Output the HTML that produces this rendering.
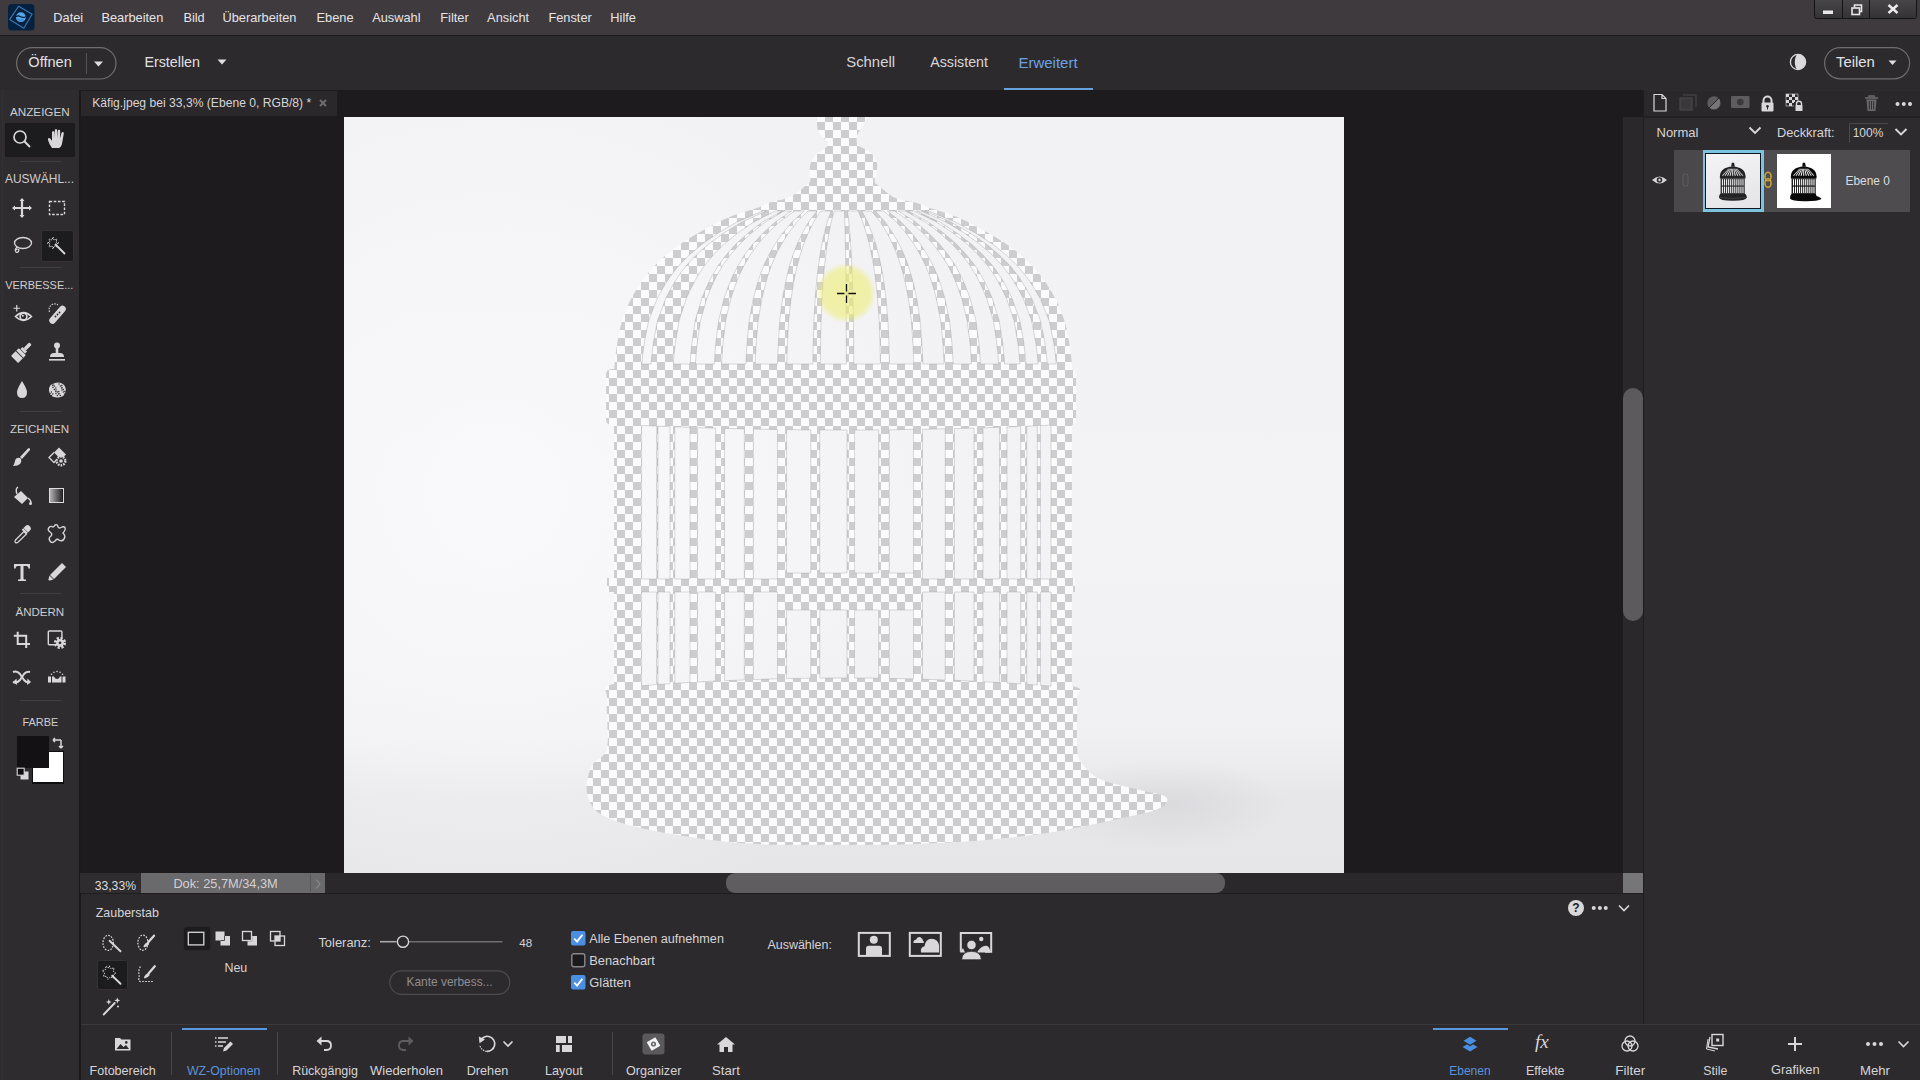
<!DOCTYPE html>
<html><head><meta charset="utf-8"><title>Photoshop Elements</title>
<style>
html,body{margin:0;padding:0;width:1920px;height:1080px;overflow:hidden;background:#2c2a2d}
body{position:relative;font-family:"Liberation Sans",sans-serif}
.t{position:absolute;white-space:nowrap}
svg{overflow:visible}
</style></head><body>
<div style="position:absolute;left:0px;top:0px;width:1920px;height:35px;background:#3f3a3e;"></div>
<div style="position:absolute;left:0px;top:35px;width:1920px;height:55px;background:#2c2a2d;"></div>
<div style="position:absolute;left:0px;top:35px;width:1920px;height:1px;background:#1b191c;"></div>
<div style="position:absolute;left:0px;top:90px;width:79px;height:990px;background:#2e2c2f;"></div>
<div style="position:absolute;left:79px;top:90px;width:1px;height:990px;background:#232124;"></div>
<div style="position:absolute;left:80px;top:90px;width:1563px;height:783px;background:#1d1b1e;"></div>
<div style="position:absolute;left:80px;top:91px;width:257px;height:25px;background:#2a282b;"></div>
<div style="position:absolute;left:1623px;top:117px;width:20px;height:756px;background:#2a282b;"></div>
<div style="position:absolute;left:1643px;top:90px;width:1px;height:934px;background:#1f1d20;"></div>
<div style="position:absolute;left:1644px;top:90px;width:276px;height:934px;background:#2d2b2e;"></div>
<div style="position:absolute;left:80px;top:873px;width:1543px;height:20px;background:#2a282b;"></div>
<div style="position:absolute;left:80px;top:893px;width:1563px;height:1px;background:#1f1d20;"></div>
<div style="position:absolute;left:80px;top:894px;width:1563px;height:130px;background:#2c2a2d;"></div>
<div style="position:absolute;left:80px;top:1024px;width:1840px;height:1px;background:#3b393c;"></div>
<div style="position:absolute;left:80px;top:1025px;width:1840px;height:55px;background:#2c2a2d;"></div>
<div style="position:absolute;left:79px;top:90px;width:2px;height:990px;background:#1b191c;"></div>
<div style="position:absolute;left:2px;top:90px;width:1px;height:990px;background:#333134;"></div>
<svg style="position:absolute;left:8px;top:4px;" width="27" height="27" viewBox="0 0 27 27"><rect x="0" y="0" width="26.5" height="26.5" rx="4" fill="#06203f"/>
<polygon points="10.6,2.2 24.1,10.3 15.8,24.3 1.7,15.4" fill="none" stroke="#3a78ad" stroke-width="1.15" stroke-linejoin="round"/>
<circle cx="12.85" cy="13.2" r="4.9" fill="#58a6ea"/>
<path d="M7.9 12.6 Q10 11.2 12.6 12.7 Q15.2 14.2 17.8 12.6" fill="none" stroke="#04152c" stroke-width="1.1"/>
<path d="M9.5 15.5 Q12 16.8 15.5 15.8" fill="none" stroke="#2b6fb0" stroke-width="0.8"/></svg>
<div class="t" style="left:53.30px;top:11.50px;font-size:12.8px;line-height:12.8px;color:#e6e4e7;">Datei</div>
<div class="t" style="left:101.40px;top:11.50px;font-size:12.8px;line-height:12.8px;color:#e6e4e7;">Bearbeiten</div>
<div class="t" style="left:183.40px;top:11.50px;font-size:12.8px;line-height:12.8px;color:#e6e4e7;">Bild</div>
<div class="t" style="left:222.50px;top:11.50px;font-size:12.8px;line-height:12.8px;color:#e6e4e7;">Überarbeiten</div>
<div class="t" style="left:316.50px;top:11.50px;font-size:12.8px;line-height:12.8px;color:#e6e4e7;">Ebene</div>
<div class="t" style="left:372.20px;top:11.50px;font-size:12.8px;line-height:12.8px;color:#e6e4e7;">Auswahl</div>
<div class="t" style="left:440.30px;top:11.50px;font-size:12.8px;line-height:12.8px;color:#e6e4e7;">Filter</div>
<div class="t" style="left:487.10px;top:11.50px;font-size:12.8px;line-height:12.8px;color:#e6e4e7;">Ansicht</div>
<div class="t" style="left:548.40px;top:11.50px;font-size:12.8px;line-height:12.8px;color:#e6e4e7;">Fenster</div>
<div class="t" style="left:610.30px;top:11.50px;font-size:12.8px;line-height:12.8px;color:#e6e4e7;">Hilfe</div>
<svg style="position:absolute;left:1814px;top:0px;" width="103" height="19" viewBox="0 0 103 19"><defs><linearGradient id="wb" x1="0" y1="0" x2="0" y2="1"><stop offset="0" stop-color="#4a474a"/><stop offset="1" stop-color="#353235"/></linearGradient></defs><rect x="0.5" y="-2" width="102" height="20.5" rx="2" fill="url(#wb)" stroke="#151415" stroke-width="1"/>
<line x1="28.5" y1="0" x2="28.5" y2="18" stroke="#151415"/>
<line x1="55.5" y1="0" x2="55.5" y2="18" stroke="#151415"/>
<rect x="9" y="10.5" width="10" height="3.5" fill="#e8e8e8"/>
<rect x="38" y="8" width="7.5" height="6.5" fill="none" stroke="#e8e8e8" stroke-width="1.6"/>
<path d="M40.5 7.5 V5 H47.5 V11.5 H45.5" fill="none" stroke="#e8e8e8" stroke-width="1.6"/>
<path d="M74.5 5 L83.5 13 M83.5 5 L74.5 13" stroke="#ececec" stroke-width="2.4"/></svg>
<svg style="position:absolute;left:16px;top:47px;" width="101" height="33" viewBox="0 0 101 33"><rect x="0.6" y="0.6" width="99.4" height="31.4" rx="15.7" fill="none" stroke="#6f6d70" stroke-width="1.2"/>
<line x1="70.5" y1="6" x2="70.5" y2="27" stroke="#555356" stroke-width="1"/>
<path d="M78 14.5 L87 14.5 L82.5 19.5 Z" fill="#e0dee1"/></svg>
<div class="t" style="left:28.30px;top:55.28px;font-size:14.6px;line-height:14.6px;color:#e2e0e3;">Öffnen</div>
<div class="t" style="left:144.40px;top:55.32px;font-size:14.3px;line-height:14.3px;color:#e2e0e3;">Erstellen</div>
<svg style="position:absolute;left:216px;top:57px;" width="12" height="10" viewBox="0 0 12 10"><path d="M1.5 2.5 L10.5 2.5 L6 7.5 Z" fill="#e0dee1"/></svg>
<div class="t" style="left:846.30px;top:55.26px;font-size:14.85px;line-height:14.85px;color:#d8d6d9;">Schnell</div>
<div class="t" style="left:930.20px;top:55.33px;font-size:14.24px;line-height:14.24px;color:#d8d6d9;">Assistent</div>
<div class="t" style="left:1018.40px;top:55.24px;font-size:15.0px;line-height:15.0px;color:#6ba3e3;">Erweitert</div>
<div style="position:absolute;left:1004px;top:88px;width:89px;height:2px;background:#6aa2dd;"></div>
<svg style="position:absolute;left:1789px;top:53px;" width="18" height="18" viewBox="0 0 18 18"><circle cx="9" cy="9" r="7.6" fill="none" stroke="#dcdadd" stroke-width="1.3"/>
<path d="M9 1.4 A7.6 7.6 0 0 1 9 16.6 A3.2 7.6 0 0 1 9 1.4 Z" fill="#dcdadd"/></svg>
<svg style="position:absolute;left:1824px;top:47px;" width="87" height="33" viewBox="0 0 87 33"><rect x="0.6" y="0.6" width="85" height="31.2" rx="15.6" fill="none" stroke="#6f6d70" stroke-width="1.2"/>
<path d="M64.5 13.5 L72.5 13.5 L68.5 18 Z" fill="#e0dee1"/></svg>
<div class="t" style="left:1836.00px;top:55.25px;font-size:14.9px;line-height:14.9px;color:#e2e0e3;">Teilen</div>
<div class="t" style="left:92.20px;top:96.87px;font-size:12.14px;line-height:12.14px;color:#d6d4d7;">Käfig.jpeg bei 33,3% (Ebene 0, RGB/8) *</div>
<svg style="position:absolute;left:318px;top:98px;" width="10" height="10" viewBox="0 0 10 10"><path d="M2 2 L8 8 M8 2 L2 8" stroke="#6e6c6f" stroke-width="2"/></svg>
<div style="position:absolute;left:344px;top:117px;width:1000px;height:756px;background:radial-gradient(ellipse 45% 60% at 15% 50%, rgba(250,250,252,0.9) 0%, rgba(250,250,252,0) 100%), linear-gradient(180deg, #f2f1f4 0%, #f3f2f5 60%, #f0eff2 82%, #e7e6e9 90%, #e6e5e8 100%);"></div>
<div style="position:absolute;left:1060px;top:760px;width:240px;height:90px;background:radial-gradient(ellipse 50% 50% at 45% 50%, rgba(210,209,213,0.6) 0%, rgba(210,209,213,0) 100%);"></div>
<svg style="position:absolute;left:0px;top:0px;pointer-events:none" width="1920" height="1080" viewBox="0 0 1920 1080"><defs><pattern id="chk" patternUnits="userSpaceOnUse" x="1" y="2" width="16" height="16">
<rect width="16" height="16" fill="#fbfbfc"/><rect x="8" y="0" width="8" height="8" fill="#cdcdcf"/><rect x="0" y="8" width="8" height="8" fill="#cdcdcf"/></pattern>
<filter id="bl" x="-5%" y="-5%" width="110%" height="110%"><feGaussianBlur stdDeviation="0.7 0.2"/></filter><clipPath id="cv"><rect x="344" y="117" width="1000" height="756"/></clipPath>
<mask id="gm"><rect width="1920" height="1080" fill="#fff"/><path d="M641.6 425.4 L656.7 426.1 L656.7 579 L641.6 579 Z M641.6 592 L656.7 592 L656.7 684.6 L641.6 685.7 Z M658 426.1 L670 426.6 L670 579 L658 579 Z M658 592 L670 592 L670 683.7 L658 684.5 Z M674.8 426.8 L690 427.3 L690 579 L674.8 579 Z M674.8 592 L690 592 L690 682.4 L674.8 683.4 Z M697.5 427.6 L715.6 428.2 L715.6 579 L697.5 579 Z M697.5 592 L715.6 592 L715.6 681.1 L697.5 682.0 Z M724.6 428.4 L744.3 428.9 L744.3 579 L724.6 579 Z M724.6 592 L744.3 592 L744.3 679.9 L724.6 680.7 Z M753.4 429.1 L777.5 429.5 L777.5 579 L753.4 579 Z M753.4 592 L777.5 592 L777.5 678.8 L753.4 679.5 Z M786.6 429.6 L810.8 429.9 L810.8 573 L786.6 573 Z M786.6 610 L810.8 610 L810.8 678.2 L786.6 678.6 Z M819.8 429.9 L847 430.0 L847 573 L819.8 573 Z M819.8 610 L847 610 L847 678.0 L819.8 678.1 Z M854.6 430.0 L878.7 429.9 L878.7 573 L854.6 573 Z M854.6 610 L878.7 610 L878.7 678.2 L854.6 678.0 Z M889.3 429.8 L913.5 429.4 L913.5 573 L889.3 573 Z M889.3 610 L913.5 610 L913.5 678.9 L889.3 678.4 Z M922.5 429.3 L945.2 428.8 L945.2 579 L922.5 579 Z M922.5 592 L945.2 592 L945.2 680.0 L922.5 679.2 Z M954.3 428.6 L974 428.1 L974 579 L954.3 579 Z M954.3 592 L974 592 L974 681.2 L954.3 680.3 Z M983 427.8 L999.6 427.2 L999.6 579 L983 579 Z M983 592 L999.6 592 L999.6 682.6 L983 681.7 Z M1007 427.0 L1020.7 426.4 L1020.7 579 L1007 579 Z M1007 592 L1020.7 592 L1020.7 683.9 L1007 683.1 Z M1026.8 426.2 L1037.3 425.7 L1037.3 579 L1026.8 579 Z M1026.8 592 L1037.3 592 L1037.3 685.1 L1026.8 684.4 Z M1040.4 425.6 L1051 425.1 L1051 579 L1040.4 579 Z M1040.4 592 L1051 592 L1051 686.2 L1040.4 685.3 Z M762.7 211.0 737.4 221.9 718.3 232.9 702.5 243.8 689.5 254.7 678.8 265.6 670.1 276.6 663.2 287.5 657.2 298.4 652.9 309.4 648.7 320.3 646.5 331.2 644.4 342.1 642.9 353.1 641.8 364.0 651.0 364.0 652.1 353.1 653.5 342.1 655.5 331.2 657.6 320.3 661.7 309.4 665.7 298.4 671.5 287.5 678.0 276.6 686.3 265.6 696.6 254.7 708.9 243.8 724.1 232.9 742.2 221.9 766.4 211.0 Z M775.3 211.0 753.9 221.9 737.9 232.9 724.5 243.8 713.6 254.7 704.5 265.6 697.2 276.6 691.4 287.5 686.3 298.4 682.7 309.4 679.1 320.3 677.3 331.2 675.5 342.1 674.2 353.1 673.3 364.0 690.1 364.0 690.9 353.1 692.1 342.1 693.7 331.2 695.3 320.3 698.6 309.4 701.8 298.4 706.4 287.5 711.6 276.6 718.2 265.6 726.4 254.7 736.2 243.8 748.3 232.9 762.7 221.9 782.0 211.0 Z M784.2 211.0 765.5 221.9 751.6 232.9 739.9 243.8 730.4 254.7 722.6 265.6 716.2 276.6 711.1 287.5 706.7 298.4 703.6 309.4 700.5 320.3 698.9 331.2 697.3 342.1 696.2 353.1 695.4 364.0 714.3 364.0 715.0 353.1 715.9 342.1 717.3 331.2 718.7 320.3 721.4 309.4 724.1 298.4 728.0 287.5 732.4 276.6 738.0 265.6 744.8 254.7 753.1 243.8 763.3 232.9 775.5 221.9 791.7 211.0 Z M794.6 211.0 779.3 221.9 767.8 232.9 758.2 243.8 750.4 254.7 743.9 265.6 738.6 276.6 734.5 287.5 730.8 298.4 728.2 309.4 725.7 320.3 724.4 331.2 723.1 342.1 722.2 353.1 721.5 364.0 745.9 364.0 746.4 353.1 747.2 342.1 748.2 331.2 749.2 320.3 751.3 309.4 753.4 298.4 756.3 287.5 759.6 276.6 763.8 265.6 769.0 254.7 775.2 243.8 782.9 232.9 792.1 221.9 804.4 211.0 Z M808.0 211.0 797.0 221.9 788.6 232.9 781.7 243.8 776.0 254.7 771.3 265.6 767.5 276.6 764.5 287.5 761.9 298.4 760.0 309.4 758.2 320.3 757.2 331.2 756.3 342.1 755.6 353.1 755.2 364.0 777.5 364.0 777.9 353.1 778.4 342.1 779.1 331.2 779.8 320.3 781.2 309.4 782.6 298.4 784.5 287.5 786.8 276.6 789.6 265.6 793.1 254.7 797.3 243.8 802.5 232.9 808.7 221.9 817.0 211.0 Z M820.7 211.0 813.6 221.9 808.2 232.9 803.8 243.8 800.2 254.7 797.2 265.6 794.7 276.6 792.8 287.5 791.1 298.4 789.9 309.4 788.7 320.3 788.1 331.2 787.5 342.1 787.1 353.1 786.8 364.0 812.9 364.0 813.0 353.1 813.3 342.1 813.6 331.2 813.9 320.3 814.6 309.4 815.2 298.4 816.1 287.5 817.2 276.6 818.5 265.6 820.1 254.7 822.0 243.8 824.4 232.9 827.3 221.9 831.1 211.0 Z M834.1 211.0 831.2 221.9 829.0 232.9 827.2 243.8 825.8 254.7 824.5 265.6 823.5 276.6 822.8 287.5 822.1 298.4 821.6 309.4 821.1 320.3 820.8 331.2 820.6 342.1 820.4 353.1 820.3 364.0 846.3 364.0 846.3 353.1 846.3 342.1 846.2 331.2 846.2 320.3 846.1 309.4 846.1 298.4 846.0 287.5 845.9 276.6 845.8 265.6 845.6 254.7 845.4 243.8 845.2 232.9 844.9 221.9 844.5 211.0 Z M847.5 211.0 848.8 221.9 849.8 232.9 850.6 243.8 851.3 254.7 851.8 265.6 852.3 276.6 852.6 287.5 852.9 298.4 853.2 309.4 853.4 320.3 853.5 331.2 853.6 342.1 853.7 353.1 853.7 364.0 880.4 364.0 880.2 353.1 880.0 342.1 879.6 331.2 879.2 320.3 878.4 309.4 877.6 298.4 876.5 287.5 875.2 276.6 873.6 265.6 871.6 254.7 869.3 243.8 866.3 232.9 862.8 221.9 858.2 211.0 Z M861.8 211.0 867.6 221.9 871.9 232.9 875.6 243.8 878.5 254.7 881.0 265.6 883.0 276.6 884.6 287.5 886.0 298.4 886.9 309.4 887.9 320.3 888.4 331.2 888.9 342.1 889.2 353.1 889.5 364.0 913.8 364.0 913.4 353.1 912.9 342.1 912.1 331.2 911.4 320.3 909.9 309.4 908.4 298.4 906.3 287.5 903.9 276.6 900.8 265.6 897.1 254.7 892.6 243.8 887.0 232.9 880.4 221.9 871.5 211.0 Z M875.1 211.0 885.1 221.9 892.6 232.9 898.9 243.8 904.0 254.7 908.2 265.6 911.6 276.6 914.4 287.5 916.7 298.4 918.4 309.4 920.1 320.3 921.0 331.2 921.8 342.1 922.4 353.1 922.8 364.0 944.1 364.0 943.6 353.1 942.8 342.1 941.8 331.2 940.7 320.3 938.5 309.4 936.4 298.4 933.4 287.5 929.9 276.6 925.6 265.6 920.2 254.7 913.7 243.8 905.8 232.9 896.3 221.9 883.6 211.0 Z M887.3 211.0 901.1 221.9 911.5 232.9 920.1 243.8 927.2 254.7 933.1 265.6 937.8 276.6 941.6 287.5 944.8 298.4 947.2 309.4 949.5 320.3 950.7 331.2 951.8 342.1 952.6 353.1 953.2 364.0 971.5 364.0 970.8 353.1 969.9 342.1 968.5 331.2 967.1 320.3 964.4 309.4 961.7 298.4 957.9 287.5 953.5 276.6 948.0 265.6 941.1 254.7 932.9 243.8 922.8 232.9 910.7 221.9 894.6 211.0 Z M898.2 211.0 915.5 221.9 928.4 232.9 939.2 243.8 948.0 254.7 955.4 265.6 961.3 276.6 966.0 287.5 970.1 298.4 973.0 309.4 975.9 320.3 977.3 331.2 978.8 342.1 979.8 353.1 980.5 364.0 998.6 364.0 997.8 353.1 996.6 342.1 995.0 331.2 993.3 320.3 990.0 309.4 986.7 298.4 982.1 287.5 976.8 276.6 970.1 265.6 961.8 254.7 951.8 243.8 939.6 232.9 925.0 221.9 905.4 211.0 Z M907.8 211.0 928.1 221.9 943.4 232.9 956.1 243.8 966.4 254.7 975.0 265.6 982.0 276.6 987.5 287.5 992.3 298.4 995.7 309.4 999.1 320.3 1000.9 331.2 1002.6 342.1 1003.8 353.1 1004.6 364.0 1020.0 364.0 1019.0 353.1 1017.7 342.1 1015.9 331.2 1014.0 320.3 1010.2 309.4 1006.5 298.4 1001.2 287.5 995.2 276.6 987.6 265.6 978.1 254.7 966.8 243.8 952.9 232.9 936.2 221.9 914.0 211.0 Z M916.4 211.0 939.4 221.9 956.6 232.9 971.0 243.8 982.7 254.7 992.5 265.6 1000.4 276.6 1006.6 287.5 1012.1 298.4 1015.9 309.4 1019.8 320.3 1021.8 331.2 1023.7 342.1 1025.0 353.1 1026.0 364.0 1038.2 364.0 1037.1 353.1 1035.7 342.1 1033.6 331.2 1031.5 320.3 1027.4 309.4 1023.3 298.4 1017.5 287.5 1010.8 276.6 1002.4 265.6 992.0 254.7 979.5 243.8 964.2 232.9 945.8 221.9 921.2 211.0 Z M924.9 211.0 950.6 221.9 969.8 232.9 985.9 243.8 999.0 254.7 1009.9 265.6 1018.6 276.6 1025.6 287.5 1031.7 298.4 1036.0 309.4 1040.3 320.3 1042.6 331.2 1044.7 342.1 1046.2 353.1 1047.3 364.0 1056.3 364.0 1055.2 353.1 1053.6 342.1 1051.4 331.2 1049.1 320.3 1044.6 309.4 1040.1 298.4 1033.7 287.5 1026.4 276.6 1017.2 265.6 1005.9 254.7 992.2 243.8 975.4 232.9 955.3 221.9 928.5 211.0 Z" fill="#000"/></mask></defs>
<g clip-path="url(#cv)"><g filter="url(#bl)"><g fill="url(#chk)" mask="url(#gm)"><path d="M816.8 112.0 C816.8 112.8 816.6 114.0 816.8 117.0 C817.0 120.0 816.9 126.9 817.9 130.3 C818.9 133.7 821.3 135.5 823.0 137.5 C824.7 139.5 827.5 140.8 828.0 142.5 C828.5 144.2 827.9 145.7 826.0 147.6 C824.1 149.5 819.3 151.2 816.8 153.8 C814.2 156.4 811.9 159.8 810.7 163.0 C809.5 166.2 809.8 170.0 809.7 173.0 C809.6 176.0 811.1 179.0 810.2 181.2 C809.4 183.4 806.7 184.4 804.6 186.3 C802.5 188.2 800.7 190.4 797.5 192.4 C794.3 194.4 789.9 196.9 785.3 198.6 C780.7 200.3 774.6 201.1 770.0 202.6 C765.4 204.1 764.1 205.4 757.4 207.8 C750.7 210.2 738.9 213.1 729.6 217.0 C720.4 220.9 711.2 225.8 701.9 231.0 C692.6 236.2 682.6 241.9 674.0 248.5 C665.4 255.1 656.8 263.0 650.0 270.7 C643.2 278.4 637.9 286.5 633.3 294.8 C628.7 303.1 625.0 312.1 622.2 320.7 C619.4 329.3 618.1 338.0 616.7 346.7 C615.3 355.4 614.4 368.3 613.9 372.6  L1072.7 372.6 C1072.2 368.3 1071.3 355.4 1069.9 346.7 C1068.5 338.0 1067.2 329.3 1064.4 320.7 C1061.6 312.1 1057.9 303.1 1053.3 294.8 C1048.7 286.5 1043.4 278.4 1036.6 270.7 C1029.8 263.0 1021.2 255.1 1012.6 248.5 C1004.0 241.9 994.0 236.2 984.7 231.0 C975.4 225.8 966.2 220.9 957.0 217.0 C947.8 213.1 935.9 210.1 929.2 207.8 C922.5 205.5 921.0 204.2 917.0 203.0 C913.0 201.8 909.1 201.6 905.0 200.5 C900.9 199.4 896.2 198.7 892.2 196.5 C888.2 194.3 883.9 189.8 881.0 187.4 C878.1 185.0 875.7 184.7 874.9 182.3 C874.1 179.9 876.1 176.2 876.4 173.0 C876.7 169.8 877.8 166.4 876.9 163.0 C876.0 159.6 873.8 155.6 870.8 152.7 C867.8 149.8 861.0 148.0 858.6 145.6 C856.2 143.2 856.6 140.7 856.6 138.5 C856.6 136.3 856.7 136.0 858.6 132.4 C860.5 128.8 866.3 120.4 867.8 117.0 C869.3 113.6 867.8 112.8 867.8 112.0  Z"/><path d="M612 369 L1071 369 Q1076 369 1076 375 L1076 419 Q1076 425 1070 425 L612 425 Q606 425 606 419 L606 375 Q606 369 612 369 Z"/><path d="M614 420 L1072 420 L1072 690 L614 690 Z"/><path d="M607 578 L1075 578 L1075 592 L607 592 Z"/><path d="M614.0 684.0 C629.5 680.7 661.8 681.2 700.0 680.0 C738.2 678.8 795.3 677.0 843.0 677.0 C890.7 677.0 947.8 678.5 986.0 680.0 C1024.2 681.5 1056.8 682.7 1072.0 686.0 C1087.2 689.3 1076.2 690.2 1077.0 700.0 C1077.8 709.8 1076.3 734.7 1077.0 745.0 C1077.7 755.3 1077.2 756.3 1081.0 762.0 C1084.8 767.7 1090.2 774.3 1100.0 779.0 C1109.8 783.7 1129.0 787.0 1140.0 790.0 C1151.0 793.0 1162.7 794.0 1166.0 797.0 C1169.3 800.0 1166.5 804.7 1160.0 808.0 C1153.5 811.3 1147.0 812.7 1127.0 817.0 C1107.0 821.3 1071.2 829.7 1040.0 834.0 C1008.8 838.3 972.8 841.2 940.0 843.0 C907.2 844.8 876.3 845.0 843.0 845.0 C809.7 845.0 772.2 845.5 740.0 843.0 C707.8 840.5 672.7 834.5 650.0 830.0 C627.3 825.5 614.2 821.0 604.0 816.0 C593.8 811.0 591.8 805.7 589.0 800.0 C586.2 794.3 586.3 788.0 587.0 782.0 C587.7 776.0 589.7 769.7 593.0 764.0 C596.3 758.3 604.7 758.7 607.0 748.0 C609.3 737.3 605.8 710.7 607.0 700.0 C608.2 689.3 598.5 687.3 614.0 684.0 Z"/></g><path d="M641.6 425.4 L656.7 426.1 L656.7 579 L641.6 579 Z M641.6 592 L656.7 592 L656.7 684.6 L641.6 685.7 Z M658 426.1 L670 426.6 L670 579 L658 579 Z M658 592 L670 592 L670 683.7 L658 684.5 Z M674.8 426.8 L690 427.3 L690 579 L674.8 579 Z M674.8 592 L690 592 L690 682.4 L674.8 683.4 Z M697.5 427.6 L715.6 428.2 L715.6 579 L697.5 579 Z M697.5 592 L715.6 592 L715.6 681.1 L697.5 682.0 Z M724.6 428.4 L744.3 428.9 L744.3 579 L724.6 579 Z M724.6 592 L744.3 592 L744.3 679.9 L724.6 680.7 Z M753.4 429.1 L777.5 429.5 L777.5 579 L753.4 579 Z M753.4 592 L777.5 592 L777.5 678.8 L753.4 679.5 Z M786.6 429.6 L810.8 429.9 L810.8 573 L786.6 573 Z M786.6 610 L810.8 610 L810.8 678.2 L786.6 678.6 Z M819.8 429.9 L847 430.0 L847 573 L819.8 573 Z M819.8 610 L847 610 L847 678.0 L819.8 678.1 Z M854.6 430.0 L878.7 429.9 L878.7 573 L854.6 573 Z M854.6 610 L878.7 610 L878.7 678.2 L854.6 678.0 Z M889.3 429.8 L913.5 429.4 L913.5 573 L889.3 573 Z M889.3 610 L913.5 610 L913.5 678.9 L889.3 678.4 Z M922.5 429.3 L945.2 428.8 L945.2 579 L922.5 579 Z M922.5 592 L945.2 592 L945.2 680.0 L922.5 679.2 Z M954.3 428.6 L974 428.1 L974 579 L954.3 579 Z M954.3 592 L974 592 L974 681.2 L954.3 680.3 Z M983 427.8 L999.6 427.2 L999.6 579 L983 579 Z M983 592 L999.6 592 L999.6 682.6 L983 681.7 Z M1007 427.0 L1020.7 426.4 L1020.7 579 L1007 579 Z M1007 592 L1020.7 592 L1020.7 683.9 L1007 683.1 Z M1026.8 426.2 L1037.3 425.7 L1037.3 579 L1026.8 579 Z M1026.8 592 L1037.3 592 L1037.3 685.1 L1026.8 684.4 Z M1040.4 425.6 L1051 425.1 L1051 579 L1040.4 579 Z M1040.4 592 L1051 592 L1051 686.2 L1040.4 685.3 Z M762.7 211.0 737.4 221.9 718.3 232.9 702.5 243.8 689.5 254.7 678.8 265.6 670.1 276.6 663.2 287.5 657.2 298.4 652.9 309.4 648.7 320.3 646.5 331.2 644.4 342.1 642.9 353.1 641.8 364.0 651.0 364.0 652.1 353.1 653.5 342.1 655.5 331.2 657.6 320.3 661.7 309.4 665.7 298.4 671.5 287.5 678.0 276.6 686.3 265.6 696.6 254.7 708.9 243.8 724.1 232.9 742.2 221.9 766.4 211.0 Z M775.3 211.0 753.9 221.9 737.9 232.9 724.5 243.8 713.6 254.7 704.5 265.6 697.2 276.6 691.4 287.5 686.3 298.4 682.7 309.4 679.1 320.3 677.3 331.2 675.5 342.1 674.2 353.1 673.3 364.0 690.1 364.0 690.9 353.1 692.1 342.1 693.7 331.2 695.3 320.3 698.6 309.4 701.8 298.4 706.4 287.5 711.6 276.6 718.2 265.6 726.4 254.7 736.2 243.8 748.3 232.9 762.7 221.9 782.0 211.0 Z M784.2 211.0 765.5 221.9 751.6 232.9 739.9 243.8 730.4 254.7 722.6 265.6 716.2 276.6 711.1 287.5 706.7 298.4 703.6 309.4 700.5 320.3 698.9 331.2 697.3 342.1 696.2 353.1 695.4 364.0 714.3 364.0 715.0 353.1 715.9 342.1 717.3 331.2 718.7 320.3 721.4 309.4 724.1 298.4 728.0 287.5 732.4 276.6 738.0 265.6 744.8 254.7 753.1 243.8 763.3 232.9 775.5 221.9 791.7 211.0 Z M794.6 211.0 779.3 221.9 767.8 232.9 758.2 243.8 750.4 254.7 743.9 265.6 738.6 276.6 734.5 287.5 730.8 298.4 728.2 309.4 725.7 320.3 724.4 331.2 723.1 342.1 722.2 353.1 721.5 364.0 745.9 364.0 746.4 353.1 747.2 342.1 748.2 331.2 749.2 320.3 751.3 309.4 753.4 298.4 756.3 287.5 759.6 276.6 763.8 265.6 769.0 254.7 775.2 243.8 782.9 232.9 792.1 221.9 804.4 211.0 Z M808.0 211.0 797.0 221.9 788.6 232.9 781.7 243.8 776.0 254.7 771.3 265.6 767.5 276.6 764.5 287.5 761.9 298.4 760.0 309.4 758.2 320.3 757.2 331.2 756.3 342.1 755.6 353.1 755.2 364.0 777.5 364.0 777.9 353.1 778.4 342.1 779.1 331.2 779.8 320.3 781.2 309.4 782.6 298.4 784.5 287.5 786.8 276.6 789.6 265.6 793.1 254.7 797.3 243.8 802.5 232.9 808.7 221.9 817.0 211.0 Z M820.7 211.0 813.6 221.9 808.2 232.9 803.8 243.8 800.2 254.7 797.2 265.6 794.7 276.6 792.8 287.5 791.1 298.4 789.9 309.4 788.7 320.3 788.1 331.2 787.5 342.1 787.1 353.1 786.8 364.0 812.9 364.0 813.0 353.1 813.3 342.1 813.6 331.2 813.9 320.3 814.6 309.4 815.2 298.4 816.1 287.5 817.2 276.6 818.5 265.6 820.1 254.7 822.0 243.8 824.4 232.9 827.3 221.9 831.1 211.0 Z M834.1 211.0 831.2 221.9 829.0 232.9 827.2 243.8 825.8 254.7 824.5 265.6 823.5 276.6 822.8 287.5 822.1 298.4 821.6 309.4 821.1 320.3 820.8 331.2 820.6 342.1 820.4 353.1 820.3 364.0 846.3 364.0 846.3 353.1 846.3 342.1 846.2 331.2 846.2 320.3 846.1 309.4 846.1 298.4 846.0 287.5 845.9 276.6 845.8 265.6 845.6 254.7 845.4 243.8 845.2 232.9 844.9 221.9 844.5 211.0 Z M847.5 211.0 848.8 221.9 849.8 232.9 850.6 243.8 851.3 254.7 851.8 265.6 852.3 276.6 852.6 287.5 852.9 298.4 853.2 309.4 853.4 320.3 853.5 331.2 853.6 342.1 853.7 353.1 853.7 364.0 880.4 364.0 880.2 353.1 880.0 342.1 879.6 331.2 879.2 320.3 878.4 309.4 877.6 298.4 876.5 287.5 875.2 276.6 873.6 265.6 871.6 254.7 869.3 243.8 866.3 232.9 862.8 221.9 858.2 211.0 Z M861.8 211.0 867.6 221.9 871.9 232.9 875.6 243.8 878.5 254.7 881.0 265.6 883.0 276.6 884.6 287.5 886.0 298.4 886.9 309.4 887.9 320.3 888.4 331.2 888.9 342.1 889.2 353.1 889.5 364.0 913.8 364.0 913.4 353.1 912.9 342.1 912.1 331.2 911.4 320.3 909.9 309.4 908.4 298.4 906.3 287.5 903.9 276.6 900.8 265.6 897.1 254.7 892.6 243.8 887.0 232.9 880.4 221.9 871.5 211.0 Z M875.1 211.0 885.1 221.9 892.6 232.9 898.9 243.8 904.0 254.7 908.2 265.6 911.6 276.6 914.4 287.5 916.7 298.4 918.4 309.4 920.1 320.3 921.0 331.2 921.8 342.1 922.4 353.1 922.8 364.0 944.1 364.0 943.6 353.1 942.8 342.1 941.8 331.2 940.7 320.3 938.5 309.4 936.4 298.4 933.4 287.5 929.9 276.6 925.6 265.6 920.2 254.7 913.7 243.8 905.8 232.9 896.3 221.9 883.6 211.0 Z M887.3 211.0 901.1 221.9 911.5 232.9 920.1 243.8 927.2 254.7 933.1 265.6 937.8 276.6 941.6 287.5 944.8 298.4 947.2 309.4 949.5 320.3 950.7 331.2 951.8 342.1 952.6 353.1 953.2 364.0 971.5 364.0 970.8 353.1 969.9 342.1 968.5 331.2 967.1 320.3 964.4 309.4 961.7 298.4 957.9 287.5 953.5 276.6 948.0 265.6 941.1 254.7 932.9 243.8 922.8 232.9 910.7 221.9 894.6 211.0 Z M898.2 211.0 915.5 221.9 928.4 232.9 939.2 243.8 948.0 254.7 955.4 265.6 961.3 276.6 966.0 287.5 970.1 298.4 973.0 309.4 975.9 320.3 977.3 331.2 978.8 342.1 979.8 353.1 980.5 364.0 998.6 364.0 997.8 353.1 996.6 342.1 995.0 331.2 993.3 320.3 990.0 309.4 986.7 298.4 982.1 287.5 976.8 276.6 970.1 265.6 961.8 254.7 951.8 243.8 939.6 232.9 925.0 221.9 905.4 211.0 Z M907.8 211.0 928.1 221.9 943.4 232.9 956.1 243.8 966.4 254.7 975.0 265.6 982.0 276.6 987.5 287.5 992.3 298.4 995.7 309.4 999.1 320.3 1000.9 331.2 1002.6 342.1 1003.8 353.1 1004.6 364.0 1020.0 364.0 1019.0 353.1 1017.7 342.1 1015.9 331.2 1014.0 320.3 1010.2 309.4 1006.5 298.4 1001.2 287.5 995.2 276.6 987.6 265.6 978.1 254.7 966.8 243.8 952.9 232.9 936.2 221.9 914.0 211.0 Z M916.4 211.0 939.4 221.9 956.6 232.9 971.0 243.8 982.7 254.7 992.5 265.6 1000.4 276.6 1006.6 287.5 1012.1 298.4 1015.9 309.4 1019.8 320.3 1021.8 331.2 1023.7 342.1 1025.0 353.1 1026.0 364.0 1038.2 364.0 1037.1 353.1 1035.7 342.1 1033.6 331.2 1031.5 320.3 1027.4 309.4 1023.3 298.4 1017.5 287.5 1010.8 276.6 1002.4 265.6 992.0 254.7 979.5 243.8 964.2 232.9 945.8 221.9 921.2 211.0 Z M924.9 211.0 950.6 221.9 969.8 232.9 985.9 243.8 999.0 254.7 1009.9 265.6 1018.6 276.6 1025.6 287.5 1031.7 298.4 1036.0 309.4 1040.3 320.3 1042.6 331.2 1044.7 342.1 1046.2 353.1 1047.3 364.0 1056.3 364.0 1055.2 353.1 1053.6 342.1 1051.4 331.2 1049.1 320.3 1044.6 309.4 1040.1 298.4 1033.7 287.5 1026.4 276.6 1017.2 265.6 1005.9 254.7 992.2 243.8 975.4 232.9 955.3 221.9 928.5 211.0 Z" fill="none" stroke="rgba(150,150,156,0.35)" stroke-width="1"/></g></g></svg>
<div style="position:absolute;left:816px;top:263px;width:60px;height:60px;border-radius:50%;background:radial-gradient(circle, rgba(238,238,110,0.62) 0%, rgba(238,238,110,0.55) 55%, rgba(238,238,110,0) 72%)"></div>
<svg style="position:absolute;left:836px;top:283px;" width="21" height="21" viewBox="0 0 21 21"><path d="M10.5 1 V8.5 M10.5 12.5 V20 M1 10.5 H8.5 M12.5 10.5 H20" stroke="#111" stroke-width="1.3"/></svg>
<div style="position:absolute;left:1623px;top:388px;width:20px;height:233px;background:#5c5a5d;border-radius:10px"></div>
<div style="position:absolute;left:726px;top:873px;width:499px;height:20px;background:#5f5d60;border-radius:9px"></div>
<div style="position:absolute;left:1623px;top:873px;width:20px;height:20px;background:#767577;"></div>
<div style="position:absolute;left:80px;top:873px;width:61px;height:20px;background:#2e2c2f;"></div>
<div style="position:absolute;left:141px;top:873px;width:184px;height:20px;background:#6a696b;"></div>
<div style="position:absolute;left:310px;top:874px;width:1px;height:18px;background:#58575a;"></div>
<svg style="position:absolute;left:312px;top:876px;" width="12" height="16" viewBox="0 0 12 16"><path d="M4 3.5 L8 8 L4 12.5" fill="none" stroke="#8e8d8f" stroke-width="1.1"/></svg>
<div class="t" style="left:94.70px;top:879.97px;font-size:12.18px;line-height:12.18px;color:#dedcdf;">33,33%</div>
<div class="t" style="left:173.40px;top:877.70px;font-size:12.77px;line-height:12.77px;color:#d2d0d3;">Dok: 25,7M/34,3M</div>
<div class="t" style="left:95.70px;top:906.53px;font-size:12.49px;line-height:12.49px;color:#d6d4d7;">Zauberstab</div>
<svg style="position:absolute;left:1566px;top:898px;" width="20" height="20" viewBox="0 0 20 20"><circle cx="10" cy="10" r="8" fill="#d9d7da"/><text x="10" y="14.3" text-anchor="middle" font-family="Liberation Sans" font-weight="bold" font-size="12" fill="#1c1b1d">?</text></svg>
<svg style="position:absolute;left:1590px;top:904px;" width="20" height="8" viewBox="0 0 20 8"><circle cx="3.75" cy="4" r="2" fill="#d9d7da"/><circle cx="9.9" cy="4" r="2" fill="#d9d7da"/><circle cx="15.75" cy="4" r="2" fill="#d9d7da"/></svg>
<svg style="position:absolute;left:1616px;top:902px;" width="16" height="12" viewBox="0 0 16 12"><path d="M3 3.5 L8 8.5 L13 3.5" fill="none" stroke="#d9d7da" stroke-width="1.6"/></svg>
<div style="position:absolute;left:97px;top:960px;width:31px;height:30px;background:#1c1b1d;border-radius:3px;box-shadow:inset 0 0 0 1px #343236"></div>
<svg style="position:absolute;left:101px;top:933px;" width="22" height="22" viewBox="0 0 22 22"><ellipse cx="7.2" cy="9.9" rx="5.2" ry="7.6" fill="none" stroke="#d9d7da" stroke-width="1.2" stroke-dasharray="1.7 1.3"/><path d="M8.6 7.8 L19.5 18.3" stroke="#d9d7da" stroke-width="1.9" stroke-linecap="round"/></svg>
<svg style="position:absolute;left:136px;top:933px;" width="22" height="22" viewBox="0 0 22 22"><ellipse cx="6.9" cy="9.7" rx="5" ry="7.6" fill="none" stroke="#d9d7da" stroke-width="1.2" stroke-dasharray="1.7 1.3"/><path d="M18 2.7 L12 9.5" stroke="#d9d7da" stroke-width="2.3" stroke-linecap="round"/><path d="M12.5 9 Q9 9.5 7.8 12.5 Q7.2 14 8 14.5 Q11.5 14 13.2 11 Z" fill="#d9d7da"/></svg>
<svg style="position:absolute;left:101px;top:965px;" width="22" height="22" viewBox="0 0 22 22"><path d="M8.2 0.8 L9.8 3.6 L13 3 L12.4 6.3 L15 8.3 L12.2 9.8 L12.3 13 L9.2 12 L7 14.4 L5.7 11.4 L2.5 11.2 L3.6 8.1 L1.5 5.6 L4.6 4.5 L4.9 1.3 L7.5 2.9 Z" fill="none" stroke="#d9d7da" stroke-width="1" stroke-dasharray="1.4 0.9"/><path d="M11.2 10.7 L19.5 18.8" stroke="#d9d7da" stroke-width="1.9" stroke-linecap="round"/></svg>
<svg style="position:absolute;left:136px;top:965px;" width="22" height="22" viewBox="0 0 22 22"><path d="M4.5 1.5 Q2.2 5 3 9 Q3.5 12 2.5 15 Q3.5 17 6 16.5 H17.5" fill="none" stroke="#d9d7da" stroke-width="1.2" stroke-dasharray="1.7 1.3"/><path d="M18.8 1.3 L12.5 8.5" stroke="#d9d7da" stroke-width="2.3" stroke-linecap="round"/><path d="M13 8 Q9.5 8.5 8.3 11.5 Q7.7 13 8.5 13.5 Q12 13 13.7 10 Z" fill="#d9d7da"/></svg>
<svg style="position:absolute;left:101px;top:996px;" width="22" height="22" viewBox="0 0 22 22"><path d="M2.7 18.5 L13.7 7" stroke="#d9d7da" stroke-width="1.9" stroke-linecap="round"/><path d="M7.8 3 L8.6 5.2 L10.8 6 L8.6 6.8 L7.8 9 L7 6.8 L4.8 6 L7 5.2 Z M16.3 1.4 L17.1 3.6 L19.3 4.4 L17.1 5.2 L16.3 7.4 L15.5 5.2 L13.3 4.4 L15.5 3.6 Z" fill="#d9d7da"/><circle cx="17" cy="10.5" r="1" fill="#d9d7da"/></svg>
<div style="position:absolute;left:184px;top:927px;width:26px;height:23px;background:#1c1b1d;border-radius:3px;box-shadow:0 0 0 1px #29272a"></div>
<svg style="position:absolute;left:184px;top:927px;" width="26" height="23" viewBox="0 0 26 23"><rect x="4.3" y="5.3" width="15.5" height="12.6" fill="none" stroke="#d9d7da" stroke-width="1.3"/></svg>
<svg style="position:absolute;left:213px;top:929px;" width="20" height="20" viewBox="0 0 20 20"><rect x="2.5" y="2.5" width="9" height="9" fill="#d9d7da"/><rect x="7.5" y="7" width="9.5" height="9.5" fill="#d9d7da"/><path d="M11.5 7 V11.5 H7.5" fill="none" stroke="#2c2a2d" stroke-width="0.8"/></svg>
<svg style="position:absolute;left:240px;top:929px;" width="20" height="20" viewBox="0 0 20 20"><rect x="2.5" y="2.5" width="9" height="9" fill="none" stroke="#d9d7da" stroke-width="1.3"/><path d="M12.2 7 H17 V16.5 H7.5 V12.2 H12.2 Z" fill="#d9d7da"/></svg>
<svg style="position:absolute;left:268px;top:929px;" width="20" height="20" viewBox="0 0 20 20"><rect x="2.5" y="2.5" width="9.5" height="9.5" fill="none" stroke="#d9d7da" stroke-width="1.3"/><rect x="7" y="7" width="9.5" height="9.5" fill="none" stroke="#d9d7da" stroke-width="1.3"/><rect x="7" y="7" width="5" height="5" fill="#d9d7da"/></svg>
<div class="t" style="left:224.40px;top:961.54px;font-size:12.46px;line-height:12.46px;color:#d6d4d7;">Neu</div>
<div class="t" style="left:318.40px;top:937.18px;font-size:12.93px;line-height:12.93px;color:#d6d4d7;">Toleranz:</div>
<svg style="position:absolute;left:376px;top:932px;" width="132" height="20" viewBox="0 0 132 20"><line x1="4" y1="9.7" x2="20.5" y2="9.7" stroke="#a9a7aa" stroke-width="1.6"/><line x1="33" y1="9.7" x2="126.5" y2="9.7" stroke="#6f6d70" stroke-width="1.6"/><circle cx="27" cy="9.7" r="5.6" fill="#2c2a2d" stroke="#d9d7da" stroke-width="1.4"/></svg>
<div class="t" style="left:519.30px;top:937.33px;font-size:11.62px;line-height:11.62px;color:#d6d4d7;">48</div>
<svg style="position:absolute;left:389px;top:970px;" width="122" height="26" viewBox="0 0 122 26"><rect x="0.8" y="0.8" width="120" height="23.6" rx="11.8" fill="none" stroke="#4e4c4f" stroke-width="1.2"/></svg>
<div class="t" style="left:406.50px;top:976.90px;font-size:11.91px;line-height:11.91px;color:#8f8d90;">Kante verbess...</div>
<svg style="position:absolute;left:571px;top:930.5px;" width="15" height="15" viewBox="0 0 15 15"><rect x="0" y="0" width="14.5" height="14.5" rx="2" fill="#4b8fe2"/><path d="M3.2 7.6 L6.1 10.6 L11.4 3.8" fill="none" stroke="#fff" stroke-width="1.8"/></svg>
<svg style="position:absolute;left:571px;top:952.8px;" width="15" height="15" viewBox="0 0 15 15"><rect x="0.8" y="0.8" width="13" height="13" rx="2" fill="#1b1a1c" stroke="#8a888b" stroke-width="1.4"/></svg>
<svg style="position:absolute;left:571px;top:975px;" width="15" height="15" viewBox="0 0 15 15"><rect x="0" y="0" width="14.5" height="14.5" rx="2" fill="#4b8fe2"/><path d="M3.2 7.6 L6.1 10.6 L11.4 3.8" fill="none" stroke="#fff" stroke-width="1.8"/></svg>
<div class="t" style="left:589.30px;top:933.02px;font-size:12.62px;line-height:12.62px;color:#d6d4d7;">Alle Ebenen aufnehmen</div>
<div class="t" style="left:589.30px;top:954.79px;font-size:12.83px;line-height:12.83px;color:#d6d4d7;">Benachbart</div>
<div class="t" style="left:589.30px;top:977.09px;font-size:12.89px;line-height:12.89px;color:#d6d4d7;">Glätten</div>
<div class="t" style="left:767.40px;top:938.53px;font-size:12.48px;line-height:12.48px;color:#d6d4d7;">Auswählen:</div>
<svg style="position:absolute;left:857px;top:931px;" width="34" height="26" viewBox="0 0 34 26"><rect x="1.8" y="1.9" width="31" height="23" fill="none" stroke="#d9d7da" stroke-width="2"/><circle cx="16.8" cy="8.8" r="4" fill="#d9d7da"/><path d="M9 25 V17.5 Q9 14.7 12 14.7 H22 Q25 14.7 25 17.5 V25 Z" fill="#d9d7da"/></svg>
<svg style="position:absolute;left:908px;top:931px;" width="34" height="26" viewBox="0 0 34 26"><rect x="1.8" y="1.9" width="31" height="23" fill="none" stroke="#d9d7da" stroke-width="2"/><path d="M5.5 12 Q5 9 8 8.8 Q9.5 5 12.5 6.3 Q14.5 7.5 15.8 11 L15.8 12 Z" fill="#d9d7da"/><path d="M13 21.5 Q12 16 16.5 15.2 Q17.5 8 23.5 7.7 Q30 8 31 14 V21.5 Z" fill="#d9d7da"/></svg>
<svg style="position:absolute;left:959px;top:931px;" width="34" height="30" viewBox="0 0 34 30"><path d="M1.8 20.8 V1.9 H32.2 V20.8 H26" fill="none" stroke="#d9d7da" stroke-width="2"/><circle cx="22.25" cy="8" r="2.2" fill="#d9d7da"/><path d="M18 21.5 Q22 14.5 27 14.7 Q31 15 31.2 21.5 Z" fill="#d9d7da"/><path d="M1 21.5 L4 17 L6 21.5 Z" fill="#d9d7da"/><circle cx="12.5" cy="14" r="4.7" fill="#d9d7da" stroke="#2c2a2d" stroke-width="0.8"/><path d="M2.7 28.8 Q2.7 20.5 12.5 20.3 Q22.3 20.5 22.3 28.8 Z" fill="#d9d7da" stroke="#2c2a2d" stroke-width="0.8"/></svg>
<div style="position:absolute;left:182px;top:1028px;width:85px;height:2px;background:#5a96dc;"></div>
<div style="position:absolute;left:171px;top:1032px;width:1px;height:43px;background:#48464a;"></div>
<div style="position:absolute;left:277px;top:1032px;width:1px;height:43px;background:#48464a;"></div>
<div style="position:absolute;left:612px;top:1032px;width:1px;height:43px;background:#48464a;"></div>
<div class="t" style="left:89.50px;top:1064.52px;font-size:12.56px;line-height:12.56px;color:#d6d4d7;">Fotobereich</div>
<div class="t" style="left:186.90px;top:1064.55px;font-size:12.37px;line-height:12.37px;color:#5b93dc;">WZ-Optionen</div>
<div class="t" style="left:292.20px;top:1064.54px;font-size:12.46px;line-height:12.46px;color:#d6d4d7;">Rückgängig</div>
<div class="t" style="left:370.00px;top:1064.47px;font-size:13.01px;line-height:13.01px;color:#d6d4d7;">Wiederholen</div>
<div class="t" style="left:466.70px;top:1064.51px;font-size:12.68px;line-height:12.68px;color:#d6d4d7;">Drehen</div>
<div class="t" style="left:544.90px;top:1064.51px;font-size:12.67px;line-height:12.67px;color:#d6d4d7;">Layout</div>
<div class="t" style="left:626.00px;top:1064.52px;font-size:12.62px;line-height:12.62px;color:#d6d4d7;">Organizer</div>
<div class="t" style="left:712.10px;top:1064.46px;font-size:13.13px;line-height:13.13px;color:#d6d4d7;">Start</div>
<svg style="position:absolute;left:114px;top:1036px;" width="18" height="16" viewBox="0 0 18 16"><path d="M1 2 H6 L7.5 3.5 H16.5 V14.5 H1 Z" fill="#d9d7da"/><path d="M2.5 13 L6.5 8 L9.5 11 L12 9 L15 13 Z" fill="#2c2a2d"/><circle cx="12.3" cy="6.4" r="1.3" fill="#2c2a2d"/></svg>
<svg style="position:absolute;left:214px;top:1035px;" width="20" height="18" viewBox="0 0 20 18"><path d="M1 3 H2.5 M4 3 H14 M1 7 H2.5 M4 7 H12 M1 11 H2.5 M4 11 H9" stroke="#d9d7da" stroke-width="1.6"/><path d="M9 16.5 L10 13 L16.5 6.5 L19 9 L12.5 15.5 Z" fill="#d9d7da"/></svg>
<svg style="position:absolute;left:315px;top:1035px;" width="20" height="18" viewBox="0 0 20 18"><path d="M5 6 H11.5 Q16 6 16 10.5 Q16 15 11.5 15 H9" fill="none" stroke="#d9d7da" stroke-width="1.8"/><path d="M1.5 6 L6.5 1.5 V10.5 Z" fill="#d9d7da"/></svg>
<svg style="position:absolute;left:395px;top:1035px;" width="20" height="18" viewBox="0 0 20 18"><path d="M15 6 H8.5 Q4 6 4 10.5 Q4 15 8.5 15 H11" fill="none" stroke="#5f5d60" stroke-width="1.8"/><path d="M18.5 6 L13.5 1.5 V10.5 Z" fill="#5f5d60"/></svg>
<svg style="position:absolute;left:476px;top:1034px;" width="40" height="20" viewBox="0 0 40 20"><path d="M4.5 6.5 A7.5 7.5 0 1 1 10.5 17.3" fill="none" stroke="#d9d7da" stroke-width="1.6"/><path d="M10.5 17.3 A7.5 7.5 0 0 1 3.8 11" fill="none" stroke="#d9d7da" stroke-width="1.2" stroke-dasharray="1.3 1.1"/><path d="M2.8 2.5 L9 5.5 L3.5 9.2 Z" fill="#d9d7da"/><path d="M27.5 7.5 L32 12 L36.5 7.5" fill="none" stroke="#d9d7da" stroke-width="1.7"/></svg>
<svg style="position:absolute;left:555px;top:1035px;" width="18" height="18" viewBox="0 0 18 18"><rect x="1" y="1" width="10" height="7" fill="#d9d7da"/><rect x="13" y="1" width="4" height="7" fill="#d9d7da"/><rect x="1" y="10" width="3.7" height="7" fill="#d9d7da"/><rect x="7" y="10" width="10" height="7" fill="#d9d7da"/></svg>
<svg style="position:absolute;left:642px;top:1033px;" width="23" height="22" viewBox="0 0 23 22"><rect x="0.5" y="0.5" width="22" height="21" rx="3" fill="#5a595c"/><rect x="6.5" y="6" width="10" height="10" transform="rotate(-30 11.5 11)" fill="#f2f2f2"/><circle cx="11.5" cy="11" r="2.6" fill="#6a696c"/><path d="M10.3 11 H12.7 M11.5 9.8 V12.2" stroke="#f2f2f2" stroke-width="0.7"/></svg>
<svg style="position:absolute;left:716px;top:1036px;" width="20" height="17" viewBox="0 0 20 17"><path d="M1 8.5 L10 1 L19 8.5 H16.5 V16 H12 V11 H8 V16 H3.5 V8.5 Z" fill="#d9d7da"/></svg>
<div style="position:absolute;left:1433px;top:1028px;width:75px;height:2px;background:#5a96dc;"></div>
<div class="t" style="left:1449.20px;top:1064.58px;font-size:12.06px;line-height:12.06px;color:#5b93dc;">Ebenen</div>
<div class="t" style="left:1526.00px;top:1064.54px;font-size:12.46px;line-height:12.46px;color:#d6d4d7;">Effekte</div>
<div class="t" style="left:1615.30px;top:1064.41px;font-size:13.51px;line-height:13.51px;color:#d6d4d7;">Filter</div>
<div class="t" style="left:1703.30px;top:1064.55px;font-size:12.31px;line-height:12.31px;color:#d6d4d7;">Stile</div>
<div class="t" style="left:1771.00px;top:1064.49px;font-size:12.88px;line-height:12.88px;color:#d6d4d7;">Grafiken</div>
<div class="t" style="left:1860.00px;top:1064.45px;font-size:13.16px;line-height:13.16px;color:#d6d4d7;">Mehr</div>
<svg style="position:absolute;left:1460px;top:1034px;" width="20" height="20" viewBox="0 0 20 20"><path d="M10 8.5 L2.5 13 L10 17.5 L17.5 13 Z" fill="#4b8fe2"/><path d="M10 2 L2.5 6.8 L10 11.5 L17.5 6.8 Z" fill="#4b8fe2" stroke="#2c2a2d" stroke-width="1.2"/></svg>
<div class="t" style="left:1535px;top:1032px;font-size:19px;line-height:20px;color:#d9d7da;font-family:'Liberation Serif',serif;font-style:italic">fx</div>
<svg style="position:absolute;left:1619px;top:1033px;" width="22" height="22" viewBox="0 0 22 22"><circle cx="11" cy="8" r="5" fill="none" stroke="#d9d7da" stroke-width="1.3"/><circle cx="8" cy="13" r="5" fill="none" stroke="#d9d7da" stroke-width="1.3"/><circle cx="14" cy="13" r="5" fill="none" stroke="#d9d7da" stroke-width="1.3"/></svg>
<svg style="position:absolute;left:1705px;top:1033px;" width="22" height="22" viewBox="0 0 22 22"><rect x="7" y="1.5" width="11" height="11" fill="none" stroke="#d9d7da" stroke-width="1.4"/><path d="M5 4 L3 14 L13 16" fill="none" stroke="#d9d7da" stroke-width="1.3"/><path d="M3 6 L1.5 16 L10 18" fill="none" stroke="#d9d7da" stroke-width="1"/><rect x="11.2" y="5.5" width="3" height="3" fill="#d9d7da"/></svg>
<svg style="position:absolute;left:1786px;top:1035px;" width="18" height="18" viewBox="0 0 18 18"><path d="M9 2 V16 M2 9 H16" stroke="#d9d7da" stroke-width="2"/></svg>
<svg style="position:absolute;left:1864px;top:1040px;" width="22" height="8" viewBox="0 0 22 8"><circle cx="4" cy="4" r="2" fill="#d9d7da"/><circle cx="10.5" cy="4" r="2" fill="#d9d7da"/><circle cx="17" cy="4" r="2" fill="#d9d7da"/></svg>
<svg style="position:absolute;left:1896px;top:1038px;" width="16" height="12" viewBox="0 0 16 12"><path d="M2.5 3.5 L7.5 8.5 L12.5 3.5" fill="none" stroke="#d9d7da" stroke-width="1.6"/></svg>
<div style="position:absolute;left:1644px;top:91px;width:276px;height:25px;background:#2a282b;"></div>
<div style="position:absolute;left:1644px;top:116px;width:276px;height:2px;background:#222023;"></div>
<div style="position:absolute;left:1644px;top:118px;width:276px;height:32px;background:#2d2b2e;"></div>
<svg style="position:absolute;left:1652px;top:93px;" width="16" height="20" viewBox="0 0 16 20"><path d="M2 1.5 H10 L14 5.5 V18 H2 Z M10 1.5 V5.5 H14" fill="none" stroke="#d9d7da" stroke-width="1.2"/></svg>
<svg style="position:absolute;left:1679px;top:94px;" width="18" height="18" viewBox="0 0 18 18"><rect x="1" y="4" width="12" height="12" fill="#3a383b" stroke="#4c4a4d" stroke-width="1"/><path d="M4 1 H17 V13" fill="none" stroke="#4c4a4d" stroke-width="1"/></svg>
<svg style="position:absolute;left:1706px;top:95px;" width="16" height="16" viewBox="0 0 16 16"><circle cx="8" cy="8" r="6.7" fill="#5d5b5e"/><path d="M3.3 12.7 L12.7 3.3 A6.7 6.7 0 0 1 3.3 12.7 Z" fill="#77757a"/><path d="M3 13 L13 3" stroke="#2a282b" stroke-width="1"/></svg>
<svg style="position:absolute;left:1731px;top:96px;" width="19" height="13" viewBox="0 0 19 13"><rect x="0" y="0" width="18.5" height="12" rx="1" fill="#5e5c5f"/><circle cx="9.3" cy="6" r="3.3" fill="#3a383b"/></svg>
<svg style="position:absolute;left:1760px;top:95px;" width="15" height="17" viewBox="0 0 15 17"><path d="M3.5 8 V5.5 A4 4 0 0 1 11.5 5.5 V8" fill="none" stroke="#d9d7da" stroke-width="2"/><rect x="1.5" y="7.5" width="12" height="9" rx="1" fill="#d9d7da"/><circle cx="7.5" cy="11.3" r="1.3" fill="#2a282b"/><rect x="7" y="11.5" width="1" height="3" fill="#2a282b"/></svg>
<svg style="position:absolute;left:1785px;top:93px;" width="20" height="19" viewBox="0 0 20 19"><rect x="1" y="1" width="3" height="3" fill="#d9d7da"/><rect x="1" y="7" width="3" height="3" fill="#d9d7da"/><rect x="4" y="4" width="3" height="3" fill="#d9d7da"/><rect x="4" y="10" width="3" height="3" fill="#d9d7da"/><rect x="7" y="1" width="3" height="3" fill="#d9d7da"/><rect x="7" y="7" width="3" height="3" fill="#d9d7da"/><rect x="10" y="4" width="3" height="3" fill="#d9d7da"/><rect x="10" y="10" width="3" height="3" fill="#d9d7da"/><rect x="1" y="1" width="12" height="12" fill="none" stroke="#d9d7da" stroke-width="0.6"/><rect x="9" y="9" width="10" height="9" fill="#2a282b"/><path d="M11.5 12 V10.8 A2.5 2.5 0 0 1 16.5 10.8 V12" fill="none" stroke="#d9d7da" stroke-width="1.4"/><rect x="10.5" y="12" width="7" height="6" rx="0.6" fill="#d9d7da"/></svg>
<svg style="position:absolute;left:1863px;top:94px;" width="17" height="18" viewBox="0 0 17 18"><path d="M2 4 H15 M6 4 V2 H11 V4" fill="none" stroke="#6b696c" stroke-width="1.4"/><path d="M3.5 5.5 H13.5 L12.5 17 H4.5 Z" fill="#6b696c"/><path d="M6.3 7 V15.5 M8.5 7 V15.5 M10.7 7 V15.5" stroke="#2a282b" stroke-width="0.9"/></svg>
<svg style="position:absolute;left:1894px;top:100px;" width="20" height="8" viewBox="0 0 20 8"><circle cx="3.5" cy="4" r="2" fill="#d9d7da"/><circle cx="9.8" cy="4" r="2" fill="#d9d7da"/><circle cx="16" cy="4" r="2" fill="#d9d7da"/></svg>
<div class="t" style="left:1656.50px;top:125.97px;font-size:13.01px;line-height:13.01px;color:#d6d4d7;">Normal</div>
<svg style="position:absolute;left:1747px;top:124px;" width="16" height="13" viewBox="0 0 16 13"><path d="M2.5 3.5 L8 9 L13.5 3.5" fill="none" stroke="#d9d7da" stroke-width="1.9"/></svg>
<div class="t" style="left:1776.90px;top:127.29px;font-size:12.82px;line-height:12.82px;color:#d6d4d7;">Deckkraft:</div>
<svg style="position:absolute;left:1848px;top:122px;" width="42" height="22" viewBox="0 0 42 22"><path d="M1.5 21 V1.5 H40" fill="none" stroke="#4a484b" stroke-width="1"/></svg>
<div class="t" style="left:1852.70px;top:127.39px;font-size:11.99px;line-height:11.99px;color:#d6d4d7;">100%</div>
<svg style="position:absolute;left:1893px;top:126px;" width="16" height="12" viewBox="0 0 16 12"><path d="M2.5 3 L8 8.5 L13.5 3" fill="none" stroke="#d9d7da" stroke-width="1.9"/></svg>
<div style="position:absolute;left:1674px;top:150px;width:236px;height:62px;background:#4e4c4f;"></div>
<div style="position:absolute;left:1674px;top:150px;width:28px;height:62px;background:#4a484b;"></div>
<svg style="position:absolute;left:1651px;top:174px;" width="17" height="12" viewBox="0 0 17 12"><path d="M1 6 Q8.5 -1 16 6 Q8.5 13 1 6 Z" fill="#d9d7da"/><circle cx="8.5" cy="6" r="2.8" fill="#2d2b2e"/><circle cx="8.5" cy="6" r="1.2" fill="#d9d7da"/></svg>
<svg style="position:absolute;left:1680px;top:172px;" width="12" height="16" viewBox="0 0 12 16"><rect x="3" y="2" width="5" height="12" rx="2.5" fill="none" stroke="#5c5a5d" stroke-width="1.2"/></svg>
<div style="position:absolute;left:1703px;top:150px;width:61px;height:62px;background:#7cc3df;"></div>
<div style="position:absolute;left:1705px;top:153px;width:56px;height:56px;background:#0a1624;"></div>
<div style="position:absolute;left:1706px;top:154px;width:54px;height:54px;background:linear-gradient(160deg,#f4f4f6,#e4e4e8);"></div>
<svg style="position:absolute;left:1706px;top:154px;" width="54" height="54" viewBox="0 0 54 54"><path d="M25.2 12.8 L25.6 9.5 Q26.8 7.6 28.2 9.2 L28.8 12.8 Z" fill="#232325"/><path d="M13.9 22.6 Q13.9 13.5 26.7 12.6 Q39.5 13.5 39.5 22.6 Z" fill="#232325"/><path d="M22.35 14.8 L23.05 14.8 L17.03 21.8 L15.93 21.8 Z" fill="#e9e9ed"/><path d="M23.35 14.8 L24.05 14.8 L19.58 21.8 L18.48 21.8 Z" fill="#e9e9ed"/><path d="M24.35 14.8 L25.05 14.8 L22.14 21.8 L21.04 21.8 Z" fill="#e9e9ed"/><path d="M25.35 14.8 L26.05 14.8 L24.69 21.8 L23.59 21.8 Z" fill="#e9e9ed"/><path d="M26.35 14.8 L27.05 14.8 L27.25 21.8 L26.15 21.8 Z" fill="#e9e9ed"/><path d="M27.35 14.8 L28.05 14.8 L29.81 21.8 L28.71 21.8 Z" fill="#e9e9ed"/><path d="M28.35 14.8 L29.05 14.8 L32.36 21.8 L31.26 21.8 Z" fill="#e9e9ed"/><path d="M29.35 14.8 L30.05 14.8 L34.92 21.8 L33.82 21.8 Z" fill="#e9e9ed"/><path d="M30.35 14.8 L31.05 14.8 L37.47 21.8 L36.37 21.8 Z" fill="#e9e9ed"/><rect x="13.9" y="22" width="25.6" height="2.6" fill="#232325"/><rect x="14.6" y="24.5" width="24.1" height="15.2" fill="#232325"/><rect x="15.90" y="25.2" width="1.15" height="6.3" fill="#e9e9ed"/><rect x="15.90" y="32.6" width="1.15" height="6.4" fill="#e9e9ed"/><rect x="17.95" y="25.2" width="1.15" height="6.3" fill="#e9e9ed"/><rect x="17.95" y="32.6" width="1.15" height="6.4" fill="#e9e9ed"/><rect x="20.00" y="25.2" width="1.15" height="6.3" fill="#e9e9ed"/><rect x="20.00" y="32.6" width="1.15" height="6.4" fill="#e9e9ed"/><rect x="22.05" y="25.2" width="1.15" height="6.3" fill="#e9e9ed"/><rect x="22.05" y="32.6" width="1.15" height="6.4" fill="#e9e9ed"/><rect x="24.10" y="25.2" width="1.15" height="6.3" fill="#e9e9ed"/><rect x="24.10" y="32.6" width="1.15" height="6.4" fill="#e9e9ed"/><rect x="26.15" y="25.2" width="1.15" height="6.3" fill="#e9e9ed"/><rect x="26.15" y="32.6" width="1.15" height="6.4" fill="#e9e9ed"/><rect x="28.20" y="25.2" width="1.15" height="6.3" fill="#e9e9ed"/><rect x="28.20" y="32.6" width="1.15" height="6.4" fill="#e9e9ed"/><rect x="30.25" y="25.2" width="1.15" height="6.3" fill="#e9e9ed"/><rect x="30.25" y="32.6" width="1.15" height="6.4" fill="#e9e9ed"/><rect x="32.30" y="25.2" width="1.15" height="6.3" fill="#e9e9ed"/><rect x="32.30" y="32.6" width="1.15" height="6.4" fill="#e9e9ed"/><rect x="34.35" y="25.2" width="1.15" height="6.3" fill="#e9e9ed"/><rect x="34.35" y="32.6" width="1.15" height="6.4" fill="#e9e9ed"/><rect x="36.40" y="25.2" width="1.15" height="6.3" fill="#e9e9ed"/><rect x="36.40" y="32.6" width="1.15" height="6.4" fill="#e9e9ed"/><path d="M14.4 39.4 H39 Q40.8 41 40.8 43.2 Q40.8 46.8 26.9 46.8 Q13 46.8 13 43.2 Q13 41 14.4 39.4 Z" fill="#232325"/><path d="M13.5 43.5 Q27 45.5 40.3 43.5" fill="none" stroke="#555" stroke-width="0.5"/></svg>
<div style="position:absolute;left:1777px;top:154px;width:54px;height:54px;background:#ffffff;"></div>
<svg style="position:absolute;left:1777px;top:154px;" width="54" height="54" viewBox="0 0 54 54"><path d="M25.2 12.8 L25.6 9.5 Q26.8 7.6 28.2 9.2 L28.8 12.8 Z" fill="#080808"/><path d="M13.9 22.6 Q13.9 13.5 26.7 12.6 Q39.5 13.5 39.5 22.6 Z" fill="#080808"/><path d="M22.35 14.8 L23.05 14.8 L17.03 21.8 L15.93 21.8 Z" fill="#ffffff"/><path d="M23.35 14.8 L24.05 14.8 L19.58 21.8 L18.48 21.8 Z" fill="#ffffff"/><path d="M24.35 14.8 L25.05 14.8 L22.14 21.8 L21.04 21.8 Z" fill="#ffffff"/><path d="M25.35 14.8 L26.05 14.8 L24.69 21.8 L23.59 21.8 Z" fill="#ffffff"/><path d="M26.35 14.8 L27.05 14.8 L27.25 21.8 L26.15 21.8 Z" fill="#ffffff"/><path d="M27.35 14.8 L28.05 14.8 L29.81 21.8 L28.71 21.8 Z" fill="#ffffff"/><path d="M28.35 14.8 L29.05 14.8 L32.36 21.8 L31.26 21.8 Z" fill="#ffffff"/><path d="M29.35 14.8 L30.05 14.8 L34.92 21.8 L33.82 21.8 Z" fill="#ffffff"/><path d="M30.35 14.8 L31.05 14.8 L37.47 21.8 L36.37 21.8 Z" fill="#ffffff"/><rect x="13.9" y="22" width="25.6" height="2.6" fill="#080808"/><rect x="14.6" y="24.5" width="24.1" height="15.2" fill="#080808"/><rect x="15.90" y="25.2" width="1.15" height="6.3" fill="#ffffff"/><rect x="15.90" y="32.6" width="1.15" height="6.4" fill="#ffffff"/><rect x="17.95" y="25.2" width="1.15" height="6.3" fill="#ffffff"/><rect x="17.95" y="32.6" width="1.15" height="6.4" fill="#ffffff"/><rect x="20.00" y="25.2" width="1.15" height="6.3" fill="#ffffff"/><rect x="20.00" y="32.6" width="1.15" height="6.4" fill="#ffffff"/><rect x="22.05" y="25.2" width="1.15" height="6.3" fill="#ffffff"/><rect x="22.05" y="32.6" width="1.15" height="6.4" fill="#ffffff"/><rect x="24.10" y="25.2" width="1.15" height="6.3" fill="#ffffff"/><rect x="24.10" y="32.6" width="1.15" height="6.4" fill="#ffffff"/><rect x="26.15" y="25.2" width="1.15" height="6.3" fill="#ffffff"/><rect x="26.15" y="32.6" width="1.15" height="6.4" fill="#ffffff"/><rect x="28.20" y="25.2" width="1.15" height="6.3" fill="#ffffff"/><rect x="28.20" y="32.6" width="1.15" height="6.4" fill="#ffffff"/><rect x="30.25" y="25.2" width="1.15" height="6.3" fill="#ffffff"/><rect x="30.25" y="32.6" width="1.15" height="6.4" fill="#ffffff"/><rect x="32.30" y="25.2" width="1.15" height="6.3" fill="#ffffff"/><rect x="32.30" y="32.6" width="1.15" height="6.4" fill="#ffffff"/><rect x="34.35" y="25.2" width="1.15" height="6.3" fill="#ffffff"/><rect x="34.35" y="32.6" width="1.15" height="6.4" fill="#ffffff"/><rect x="36.40" y="25.2" width="1.15" height="6.3" fill="#ffffff"/><rect x="36.40" y="32.6" width="1.15" height="6.4" fill="#ffffff"/><path d="M14.6 39.4 H38.7 L39.5 42 Q44 43.5 44.5 45 Q40 47.5 27 47.2 Q15 47.2 13 44.5 Q13 41.5 14.6 39.4 Z" fill="#080808"/></svg>
<svg style="position:absolute;left:1763px;top:171px;" width="10" height="18" viewBox="0 0 10 18"><ellipse cx="5" cy="5.5" rx="3" ry="4.3" fill="none" stroke="#c9a43c" stroke-width="1.6"/><ellipse cx="5" cy="12" rx="3" ry="4.3" fill="none" stroke="#c9a43c" stroke-width="1.6"/></svg>
<div class="t" style="left:1845.50px;top:175.60px;font-size:11.93px;line-height:11.93px;color:#dedcdf;">Ebene 0</div>
<div class="t" style="left:10.00px;top:106.13px;font-size:11.68px;line-height:11.68px;color:#cfcdd0;">ANZEIGEN</div>
<div class="t" style="left:5.00px;top:174.40px;font-size:11.94px;line-height:11.94px;color:#cfcdd0;">AUSWÄHL...</div>
<div class="t" style="left:5.30px;top:280.42px;font-size:10.93px;line-height:10.93px;color:#cfcdd0;">VERBESSE...</div>
<div class="t" style="left:10.00px;top:423.64px;font-size:11.55px;line-height:11.55px;color:#cfcdd0;">ZEICHNEN</div>
<div class="t" style="left:15.50px;top:607.14px;font-size:11.54px;line-height:11.54px;color:#cfcdd0;">ÄNDERN</div>
<div class="t" style="left:22.40px;top:716.71px;font-size:10.95px;line-height:10.95px;color:#cfcdd0;">FARBE</div>
<div style="position:absolute;left:20px;top:161px;width:42px;height:1px;background:#403e41;"></div>
<div style="position:absolute;left:20px;top:267px;width:42px;height:1px;background:#403e41;"></div>
<div style="position:absolute;left:20px;top:411px;width:42px;height:1px;background:#403e41;"></div>
<div style="position:absolute;left:20px;top:593px;width:42px;height:1px;background:#403e41;"></div>
<div style="position:absolute;left:20px;top:700px;width:42px;height:1px;background:#403e41;"></div>
<div style="position:absolute;left:5px;top:123px;width:70px;height:34px;background:#1c1b1d;"></div>
<div style="position:absolute;left:41px;top:230px;width:33px;height:32px;background:#1c1b1d;border-radius:3px;box-shadow:inset 0 0 0 1px #343236"></div>
<svg style="position:absolute;left:11px;top:128px;" width="22" height="22" viewBox="0 0 22 22"><circle cx="9" cy="9" r="6" fill="none" stroke="#d9d7da" stroke-width="1.7"/><path d="M13.3 13.3 L19 19" stroke="#d9d7da" stroke-width="2"/></svg>
<svg style="position:absolute;left:46px;top:128px;" width="22" height="22" viewBox="0 0 22 22"><path d="M6 20 Q3 16 2 12 Q1.5 10 3 10 Q4.5 10 6 13 L6 4.5 Q6 3 7.2 3 Q8.4 3 8.4 4.5 L8.5 10 L8.8 2.5 Q8.8 1 10 1 Q11.2 1 11.2 2.5 L11.3 10 L11.8 3 Q11.8 1.8 13 1.8 Q14.2 1.8 14.2 3 L14 10.5 L15.5 5 Q15.8 3.8 16.9 4 Q18 4.2 17.8 5.5 L16.5 13 Q15.8 19 13 20 Z" fill="#d9d7da"/></svg>
<svg style="position:absolute;left:11px;top:197px;" width="22" height="22" viewBox="0 0 22 22"><path d="M11 2 V20 M2 11 H20" stroke="#d9d7da" stroke-width="2.2"/><path d="M11 1 L8.5 4 H13.5 Z M11 21 L8.5 18 H13.5 Z M1 11 L4 8.5 V13.5 Z M21 11 L18 8.5 V13.5 Z" fill="#d9d7da"/></svg>
<svg style="position:absolute;left:46px;top:197px;" width="22" height="22" viewBox="0 0 22 22"><rect x="3.5" y="4.5" width="15" height="13" fill="none" stroke="#d9d7da" stroke-width="1.4" stroke-dasharray="2.6 1.6"/></svg>
<svg style="position:absolute;left:11px;top:234px;" width="22" height="22" viewBox="0 0 22 22"><ellipse cx="12" cy="9" rx="8.5" ry="5.5" fill="none" stroke="#d9d7da" stroke-width="1.3"/><path d="M6 13 Q3 16 5 18 Q7 19.5 8 16 Q7 14 5 16" fill="none" stroke="#d9d7da" stroke-width="1.2"/></svg>
<svg style="position:absolute;left:46px;top:234px;" width="22" height="22" viewBox="0 0 22 22"><path d="M5 3 L6 6 L9 5 L8 8 L11 9 L8 10 L9 13 L6 12 L5 15 L4 12 L1 13 L2 10 L-1 9 L2 8 L1 5 L4 6 Z" fill="none" stroke="#d9d7da" stroke-width="1" stroke-dasharray="1.3 1" transform="translate(2 0)"/><path d="M9 10 L19 20" stroke="#d9d7da" stroke-width="1.8"/></svg>
<svg style="position:absolute;left:11px;top:302px;" width="22" height="22" viewBox="0 0 22 22"><path d="M4.5 14.5 Q12.5 6.8 20.5 14.5 Q12.5 22.2 4.5 14.5 Z" fill="none" stroke="#d9d7da" stroke-width="1.6"/><circle cx="12.5" cy="14.5" r="3.4" fill="none" stroke="#d9d7da" stroke-width="1.6"/><circle cx="11.8" cy="13.8" r="1" fill="#d9d7da"/><path d="M5.75 3 V9.5 M2.5 6.25 H9" stroke="#d9d7da" stroke-width="1.2"/></svg>
<svg style="position:absolute;left:46px;top:302px;" width="22" height="22" viewBox="0 0 22 22"><path d="M6.5 18.5 L16.5 7" stroke="#d9d7da" stroke-width="6.5" stroke-linecap="round"/><circle cx="9.5" cy="14.5" r="0.9" fill="#2e2c2f"/><circle cx="11.5" cy="12.5" r="0.9" fill="#2e2c2f"/><circle cx="13.5" cy="10.5" r="0.9" fill="#2e2c2f"/><path d="M3.5 10 Q2 5 6 2.5 Q9.5 1 12 3" fill="none" stroke="#d9d7da" stroke-width="1.1" stroke-dasharray="1.5 1.2"/></svg>
<svg style="position:absolute;left:11px;top:341px;" width="22" height="22" viewBox="0 0 22 22"><g transform="rotate(45 11 11)"><rect x="9.3" y="-1" width="3.4" height="8" rx="1" fill="#d9d7da"/><rect x="7.8" y="7" width="6.4" height="3" fill="#d9d7da"/><rect x="6" y="10.5" width="10" height="11" rx="0.8" fill="#d9d7da"/><rect x="6" y="14" width="10" height="0.9" fill="#2e2c2f"/></g></svg>
<svg style="position:absolute;left:46px;top:341px;" width="22" height="22" viewBox="0 0 22 22"><circle cx="11" cy="4.5" r="3" fill="#d9d7da"/><rect x="9.7" y="6" width="2.6" height="6" fill="#d9d7da"/><path d="M4 16 Q4 12 8 12 H14 Q18 12 18 16 Z" fill="#d9d7da"/><rect x="3" y="18" width="16" height="1.6" fill="#d9d7da"/></svg>
<svg style="position:absolute;left:11px;top:379px;" width="22" height="22" viewBox="0 0 22 22"><path d="M11 2 Q15.5 9 16 13 Q16 19 11 19 Q6 19 6 13 Q6.5 9 11 2 Z" fill="#d9d7da"/></svg>
<svg style="position:absolute;left:46px;top:379px;" width="22" height="22" viewBox="0 0 22 22"><path d="M3 12 Q2.5 5 9 4 Q14 2.5 17.5 5.5 Q20.5 8.5 19.5 13 Q18.5 18 12 18.5 Q4 19 3 12 Z" fill="#d9d7da"/><circle cx="4.0" cy="5.0" r="0.75" fill="#2e2c2f"/><circle cx="11.4" cy="16.5" r="0.75" fill="#2e2c2f"/><circle cx="18.8" cy="15.0" r="0.75" fill="#2e2c2f"/><circle cx="10.0" cy="14.5" r="0.75" fill="#2e2c2f"/><circle cx="17.4" cy="13.0" r="0.75" fill="#2e2c2f"/><circle cx="9.8" cy="12.5" r="0.75" fill="#2e2c2f"/><circle cx="16.0" cy="11.0" r="0.75" fill="#2e2c2f"/><circle cx="8.4" cy="10.5" r="0.75" fill="#2e2c2f"/><circle cx="15.8" cy="9.0" r="0.75" fill="#2e2c2f"/><circle cx="7.0" cy="8.5" r="0.75" fill="#2e2c2f"/><circle cx="14.4" cy="7.0" r="0.75" fill="#2e2c2f"/><circle cx="6.8" cy="6.5" r="0.75" fill="#2e2c2f"/><circle cx="13.0" cy="5.0" r="0.75" fill="#2e2c2f"/><circle cx="5.4" cy="16.5" r="0.75" fill="#2e2c2f"/><circle cx="12.8" cy="15.0" r="0.75" fill="#2e2c2f"/><circle cx="4.0" cy="14.5" r="0.75" fill="#2e2c2f"/><circle cx="11.4" cy="13.0" r="0.75" fill="#2e2c2f"/><circle cx="18.8" cy="12.5" r="0.75" fill="#2e2c2f"/><circle cx="10.0" cy="11.0" r="0.75" fill="#2e2c2f"/><circle cx="17.4" cy="10.5" r="0.75" fill="#2e2c2f"/><circle cx="9.8" cy="9.0" r="0.75" fill="#2e2c2f"/><circle cx="16.0" cy="8.5" r="0.75" fill="#2e2c2f"/><circle cx="8.4" cy="7.0" r="0.75" fill="#2e2c2f"/><circle cx="15.8" cy="6.5" r="0.75" fill="#2e2c2f"/><circle cx="7.0" cy="5.0" r="0.75" fill="#2e2c2f"/><circle cx="14.4" cy="16.5" r="0.75" fill="#2e2c2f"/><circle cx="6.8" cy="15.0" r="0.75" fill="#2e2c2f"/><circle cx="13.0" cy="14.5" r="0.75" fill="#2e2c2f"/><circle cx="5.4" cy="13.0" r="0.75" fill="#2e2c2f"/><circle cx="12.8" cy="12.5" r="0.75" fill="#2e2c2f"/></svg>
<svg style="position:absolute;left:11px;top:446px;" width="22" height="22" viewBox="0 0 22 22"><path d="M18 2 Q19.5 2.5 19 4 L11 13 L9 11 L17 2.5 Z" fill="#d9d7da"/><path d="M9 12 Q5 11 4 15 Q3.5 18 2 20 Q7 20 9.5 17.5 Q11 15.5 10 13 Z" fill="#d9d7da"/></svg>
<svg style="position:absolute;left:46px;top:446px;" width="22" height="22" viewBox="0 0 22 22"><path d="M13 1.5 L20 8.5 L15 13.5 L8 6.5 Z" fill="#d9d7da"/><path d="M8 6.5 L3 11.5 L8 16.5 L10.5 14" fill="none" stroke="#d9d7da" stroke-width="1.3"/><circle cx="15" cy="15" r="4.3" fill="#2e2c2f" stroke="#d9d7da" stroke-width="2.4" stroke-dasharray="1.6 1.1"/><circle cx="15" cy="15" r="1.8" fill="#d9d7da"/></svg>
<svg style="position:absolute;left:11px;top:485px;" width="22" height="22" viewBox="0 0 22 22"><path d="M3 12 L10 6 L17 13 L11 19 Z" fill="#d9d7da"/><path d="M6 9 Q4 4 7 2 M17 13 Q20 15 20 18" fill="none" stroke="#d9d7da" stroke-width="1.4"/><circle cx="19.5" cy="18.5" r="1.5" fill="#d9d7da"/></svg>
<div style="position:absolute;left:49px;top:488px;width:15px;height:15px;border:1.5px solid #dcdadd;background:linear-gradient(90deg,#b3b1b4,#1e1c1f);box-sizing:border-box"></div>
<svg style="position:absolute;left:11px;top:523px;" width="22" height="22" viewBox="0 0 22 22"><path d="M14.5 3 Q16.5 0.8 18.8 3.2 Q21 5.5 19 7.5 L17 9.5 L12.5 5 Z" fill="#d9d7da"/><path d="M11.5 6 L16 10.5" stroke="#d9d7da" stroke-width="2.2"/><path d="M13 8.5 L5 16.5 Q3.2 18.6 4.5 19.5 Q5.5 20.6 7.5 18.8 L15.5 11 Z" fill="none" stroke="#d9d7da" stroke-width="1.2"/></svg>
<svg style="position:absolute;left:46px;top:523px;" width="22" height="22" viewBox="0 0 22 22"><path d="M9 2 Q12 1 12 4 Q13 6 16 4 Q20 3 19 7 Q18 9 17 10 Q20 13 18 16 Q16 19 13 17 Q11 15 9 18 Q6 21 4 18 Q2 15 5 13 Q7 11 4 9 Q1 7 3 4.5 Q5 2.5 7 4 Q8 4 9 2 Z" fill="none" stroke="#d9d7da" stroke-width="1.4"/></svg>
<svg style="position:absolute;left:11px;top:561px;" width="22" height="22" viewBox="0 0 22 22"><path d="M3 3 H19 V7.5 H17.5 Q17.5 5 15.5 5 H12.5 V17.5 Q12.5 18.5 14 18.5 H15 V20 H7 V18.5 H8 Q9.5 18.5 9.5 17.5 V5 H6.5 Q4.5 5 4.5 7.5 H3 Z" fill="#d9d7da"/></svg>
<svg style="position:absolute;left:46px;top:561px;" width="22" height="22" viewBox="0 0 22 22"><path d="M16 2 L20 6 L8 18 L4 14 Z" fill="#d9d7da"/><path d="M3.5 14.5 L7.5 18.5 L2 20 Z" fill="#d9d7da"/><path d="M3 19 L2 20" stroke="#2e2c2f" stroke-width="1"/></svg>
<svg style="position:absolute;left:11px;top:629px;" width="22" height="22" viewBox="0 0 22 22"><path d="M2.8 6.7 H15.2 V19 M6.7 2.8 V15 H19" fill="none" stroke="#d9d7da" stroke-width="2"/></svg>
<svg style="position:absolute;left:46px;top:629px;" width="22" height="22" viewBox="0 0 22 22"><path d="M9 15.8 H3.3 Q2.3 15.8 2.3 14.8 V3 Q2.3 2 3.3 2 H14.9 Q15.9 2 15.9 3 V8" fill="none" stroke="#d9d7da" stroke-width="1.4"/><circle cx="14" cy="13.8" r="4.6" fill="none" stroke="#d9d7da" stroke-width="3" stroke-dasharray="2.1 1.5"/><circle cx="14" cy="13.8" r="3.9" fill="#d9d7da"/><circle cx="14" cy="13.8" r="1.4" fill="#2e2c2f"/></svg>
<svg style="position:absolute;left:11px;top:666px;" width="22" height="22" viewBox="0 0 22 22"><path d="M2 6 Q6 4.5 9 8 L13 14 Q15.5 17 19 16" fill="none" stroke="#d9d7da" stroke-width="2"/><path d="M2 16 Q6 17.5 9 14 L13 8 Q15.5 5 19 6" fill="none" stroke="#d9d7da" stroke-width="2"/><path d="M20 16 L16.5 12.5 L16 19 Z M2 16 L5.5 12.5 L6 19 Z" fill="#d9d7da"/></svg>
<svg style="position:absolute;left:46px;top:666px;" width="22" height="22" viewBox="0 0 22 22"><rect x="2" y="10.5" width="3" height="6" fill="#d9d7da"/><path d="M6 10.5 H8 Q9 13 11 13 Q13 13 14 10.5 H15.5 V16.5 H6 Z" fill="#d9d7da"/><rect x="16.5" y="10.5" width="3" height="6" fill="#d9d7da"/><circle cx="5.5" cy="8.3" r="0.8" fill="#d9d7da"/><circle cx="8" cy="6.3" r="0.8" fill="#d9d7da"/><circle cx="11" cy="5.5" r="0.8" fill="#d9d7da"/><circle cx="14" cy="6.3" r="0.8" fill="#d9d7da"/><circle cx="16.5" cy="8.3" r="0.8" fill="#d9d7da"/></svg>
<div style="position:absolute;left:17px;top:736px;width:32px;height:32px;background:#141114;"></div>
<div style="position:absolute;left:32px;top:751px;width:32px;height:33px;background:#0e0d0f;"></div>
<div style="position:absolute;left:33px;top:752px;width:30px;height:30px;background:#ffffff;"></div>
<div style="position:absolute;left:17px;top:736px;width:32px;height:32px;background:#141114;"></div>
<svg style="position:absolute;left:50px;top:736px;" width="16" height="14" viewBox="0 0 16 14"><path d="M3 4 H11 M3 4 L5 2 M3 4 L5 6 M11 4 V12 M11 12 L9 10 M11 12 L13 10" fill="none" stroke="#d9d7da" stroke-width="1.5"/></svg>
<svg style="position:absolute;left:16px;top:767px;" width="14" height="14" viewBox="0 0 14 14"><rect x="4.5" y="4.5" width="8" height="8" fill="#d9d7da"/><rect x="1.2" y="1.2" width="7" height="7" fill="#0e0d0f" stroke="#d9d7da" stroke-width="1.1"/></svg>
</body></html>
